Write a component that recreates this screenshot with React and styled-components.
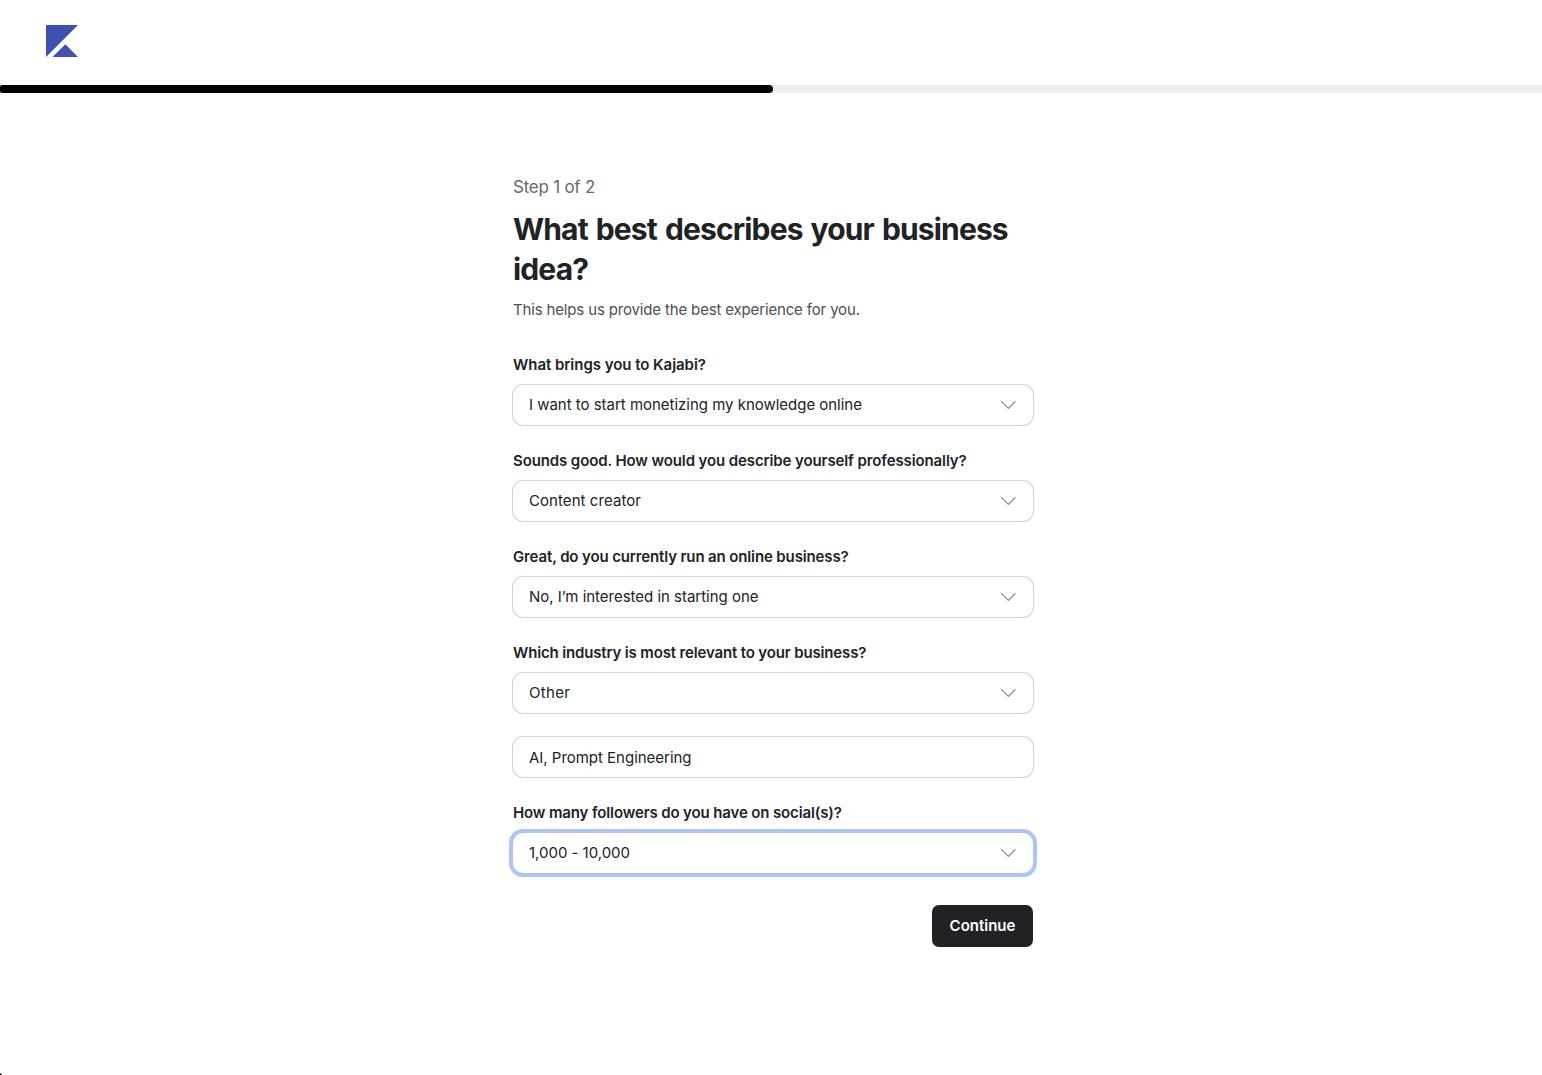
import React from "react";
import styled, { createGlobalStyle, css } from "styled-components";

const GlobalStyle = createGlobalStyle`
  *, *::before, *::after { box-sizing: border-box; }
  html, body {
    margin: 0;
    background: #fff;
    overflow: hidden;
  }
  body {
    font-family: Inter, "Liberation Sans", sans-serif;
    font-size: 15px;
    line-height: 24px;
    color: #202226;
  }
`;

const Page = styled.div`
  position: relative;
  width: 1546px;
  min-height: 1075px;
  display: flex;
  flex-direction: column;
  overflow: hidden;
`;

const Header = styled.header`
  height: 85px;
  padding: 25px 46px 0;
`;

const Logo = styled.svg`
  display: block;
  width: 32px;
  height: 32px;
  fill: #404fb2;
`;

const ProgressTrack = styled.div`
  height: 8px;
  background: #eeeeef;
`;

const ProgressFill = styled.div`
  width: ${(p) => p.$value}%;
  height: 100%;
  border-radius: 2px 4px 4px 2px;
  background: #000;
`;

const Main = styled.main`
  width: 520px;
  margin: 0 auto;
  padding-top: 80px;
  display: flex;
  flex-direction: column;
`;

const Step = styled.p`
  margin: 0 0 8px;
  font-size: 17px;
  line-height: 28px;
  letter-spacing: -0.24px;
  color: #64676d;
`;

const Title = styled.h1`
  margin: 0 0 9px;
  font-size: 30px;
  font-weight: 700;
  line-height: 40px;
  letter-spacing: -0.85px;
  word-spacing: 1.7px;
`;

const Subtitle = styled.p`
  margin: 0 0 31px;
  letter-spacing: -0.155px;
  color: #4c4f55;
`;

const Form = styled.form`
  display: flex;
  flex-direction: column;
  gap: 24px;
`;

const Field = styled.div`
  display: flex;
  flex-direction: column;
  gap: 8px;
`;

const Label = styled.span`
  font-weight: 600;
  letter-spacing: ${(p) => p.$tracking || "-0.13px"};
`;

const Control = styled.div`
  display: flex;
  align-items: center;
  justify-content: space-between;
  height: 40px;
  padding: ${(p) => (p.$text ? "2px 16px 0" : "0 16px")};
  border-radius: 10px;
  background: #fff;
  box-shadow: 0 0 0 1px #d2d3d6;
  letter-spacing: ${(p) => p.$tracking || "-0.02px"};
  ${(p) =>
    p.$focused &&
    css`
      box-shadow: 0 0 0 4px #a9c6f5;
    `}
`;

const Chevron = styled.svg`
  width: 18px;
  height: 12px;
  fill: none;
  stroke: #85878c;
  stroke-width: 1.2;
  stroke-linecap: round;
  stroke-linejoin: round;
`;

const Actions = styled.div`
  display: flex;
  justify-content: flex-end;
  margin-top: 8px;
`;

const Button = styled.button`
  width: 101px;
  height: 42px;
  padding: 0;
  border: 0;
  border-radius: 7px;
  background: #202226;
  color: #fff;
  font: 600 15px/24px Inter, "Liberation Sans", sans-serif;
`;

const CornerMark = styled.svg`
  position: absolute;
  left: 0;
  bottom: 0;
  width: 2px;
  height: 2px;
`;

const fields = [
  {
    label: "What brings you to Kajabi?",
    labelTracking: "-0.04px",
    value: "I want to start monetizing my knowledge online",
    select: true,
  },
  {
    label: "Sounds good. How would you describe yourself professionally?",
    labelTracking: "-0.11px",
    value: "Content creator",
    tracking: "0.07px",
    select: true,
  },
  {
    label: "Great, do you currently run an online business?",
    value: "No, I’m interested in starting one",
    select: true,
  },
  {
    label: "Which industry is most relevant to your business?",
    labelTracking: "-0.15px",
    value: "Other",
    tracking: "0.34px",
    select: true,
  },
  { value: "AI, Prompt Engineering" },
  {
    label: "How many followers do you have on social(s)?",
    value: "1,000 - 10,000",
    select: true,
    focused: true,
  },
];

export default function App() {
  return (
    <>
      <GlobalStyle />
      <Page>
        <Header>
          <Logo viewBox="0 0 32 32">
            <path d="M0 0H32L0 32Z" />
            <path d="M6.5 32L19.3 19.2L32 32Z" />
          </Logo>
        </Header>
        <ProgressTrack>
          <ProgressFill $value={50} />
        </ProgressTrack>
        <Main>
          <Step>Step 1 of 2</Step>
          <Title>What best describes your business idea?</Title>
          <Subtitle>This helps us provide the best experience for you.</Subtitle>
          <Form>
            {fields.map((f) => (
              <Field key={f.value}>
                {f.label && <Label $tracking={f.labelTracking}>{f.label}</Label>}
                <Control $focused={f.focused} $text={!f.select} $tracking={f.tracking}>
                  <span>{f.value}</span>
                  {f.select && (
                    <Chevron viewBox="0 0 18 12">
                      <path d="M2.7 2.6L9.4 9.3L16.1 2.6" />
                    </Chevron>
                  )}
                </Control>
              </Field>
            ))}
            <Actions>
              <Button type="button">Continue</Button>
            </Actions>
          </Form>
        </Main>
        <CornerMark viewBox="0 0 2 2">
          <path d="M0 0Q1.5 0.5 2 2H0Z" />
        </CornerMark>
      </Page>
    </>
  );
}
